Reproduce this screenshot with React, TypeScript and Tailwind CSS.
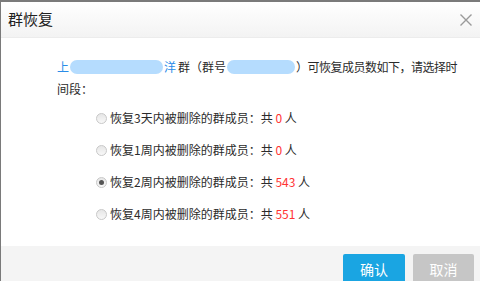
import React from "react";

const font = { fontFamily: '"Noto Sans CJK SC", "Noto Sans", sans-serif' };

function Radio({ checked }: { checked?: boolean }) {
  return (
    <span className="relative inline-flex h-[11px] w-[11px] items-center justify-center rounded-full border border-[#c8c8c8] bg-gradient-to-b from-[#e6e6e6] to-[#f8f8f8]">
      {checked && <span className="h-[5px] w-[5px] rounded-full bg-[#555]" />}
    </span>
  );
}

function Row({ label, count, checked }: { label: string; count: string; checked?: boolean }) {
  return (
    <div className="flex h-[32px] items-center">
      <Radio checked={checked} />
      <span className="ml-[3px] text-[12px] text-[#2b2b2b]">
        {label}
        <span className="text-[#ff3333]"> {count} </span>
        人
      </span>
    </div>
  );
}

export default function App() {
  return (
    <div
      style={font}
      className="flex h-[281px] w-[480px] flex-col overflow-hidden border-l border-t-2 border-[#7a7a7a] bg-white"
    >
      <div className="flex h-[36px] shrink-0 items-center justify-between border-b border-[#ececec] bg-gradient-to-b from-white to-[#f3f3f3] pl-[7px] pr-[5px]">
        <span className="text-[15px] text-[#222]">群恢复</span>
        <svg width="14" height="14" viewBox="0 0 14 14" className="mr-[2px]">
          <path d="M1.5 1.5 L12.5 12.5 M12.5 1.5 L1.5 12.5" stroke="#9a9a9a" strokeWidth="1.4" />
        </svg>
      </div>
      <div className="flex-1 pl-[56px] pt-[18px]">
        <div className="text-[12px] leading-[22px] text-[#2b2b2b]">
          <div className="flex items-center">
            <span className="text-[#2a8ce8]">上</span>
            <span className="mx-[1px] inline-block h-[14px] w-[93px] rounded-[7px] bg-[#b5dcfe]" />
            <span className="text-[#2a8ce8]">洋</span>
            <span className="ml-[2px]">群（群号</span>
            <span className="mx-[1px] inline-block h-[14px] w-[68px] rounded-[7px] bg-[#b5dcfe]" />
            <span className="tracking-[-0.5px]">）可恢复成员数如下，请选择时</span>
          </div>
          <div>间段：</div>
        </div>
        <div className="ml-[39px] mt-[2px]">
          <Row label="恢复3天内被删除的群成员：共" count="0" />
          <Row label="恢复1周内被删除的群成员：共" count="0" />
          <Row label="恢复2周内被删除的群成员：共" count="543" checked />
          <Row label="恢复4周内被删除的群成员：共" count="551" />
        </div>
      </div>
      <div className="flex h-[35px] shrink-0 justify-end gap-[8px] bg-[#f4f4f4] pr-[6px] pt-[8px]">
        <button className="h-[30px] w-[62px] rounded-[2px] bg-[#1aa5e2] text-[14px] text-white">确认</button>
        <button className="h-[30px] w-[61px] rounded-[2px] bg-[#c6c6c6] text-[14px] text-white">取消</button>
      </div>
    </div>
  );
}
